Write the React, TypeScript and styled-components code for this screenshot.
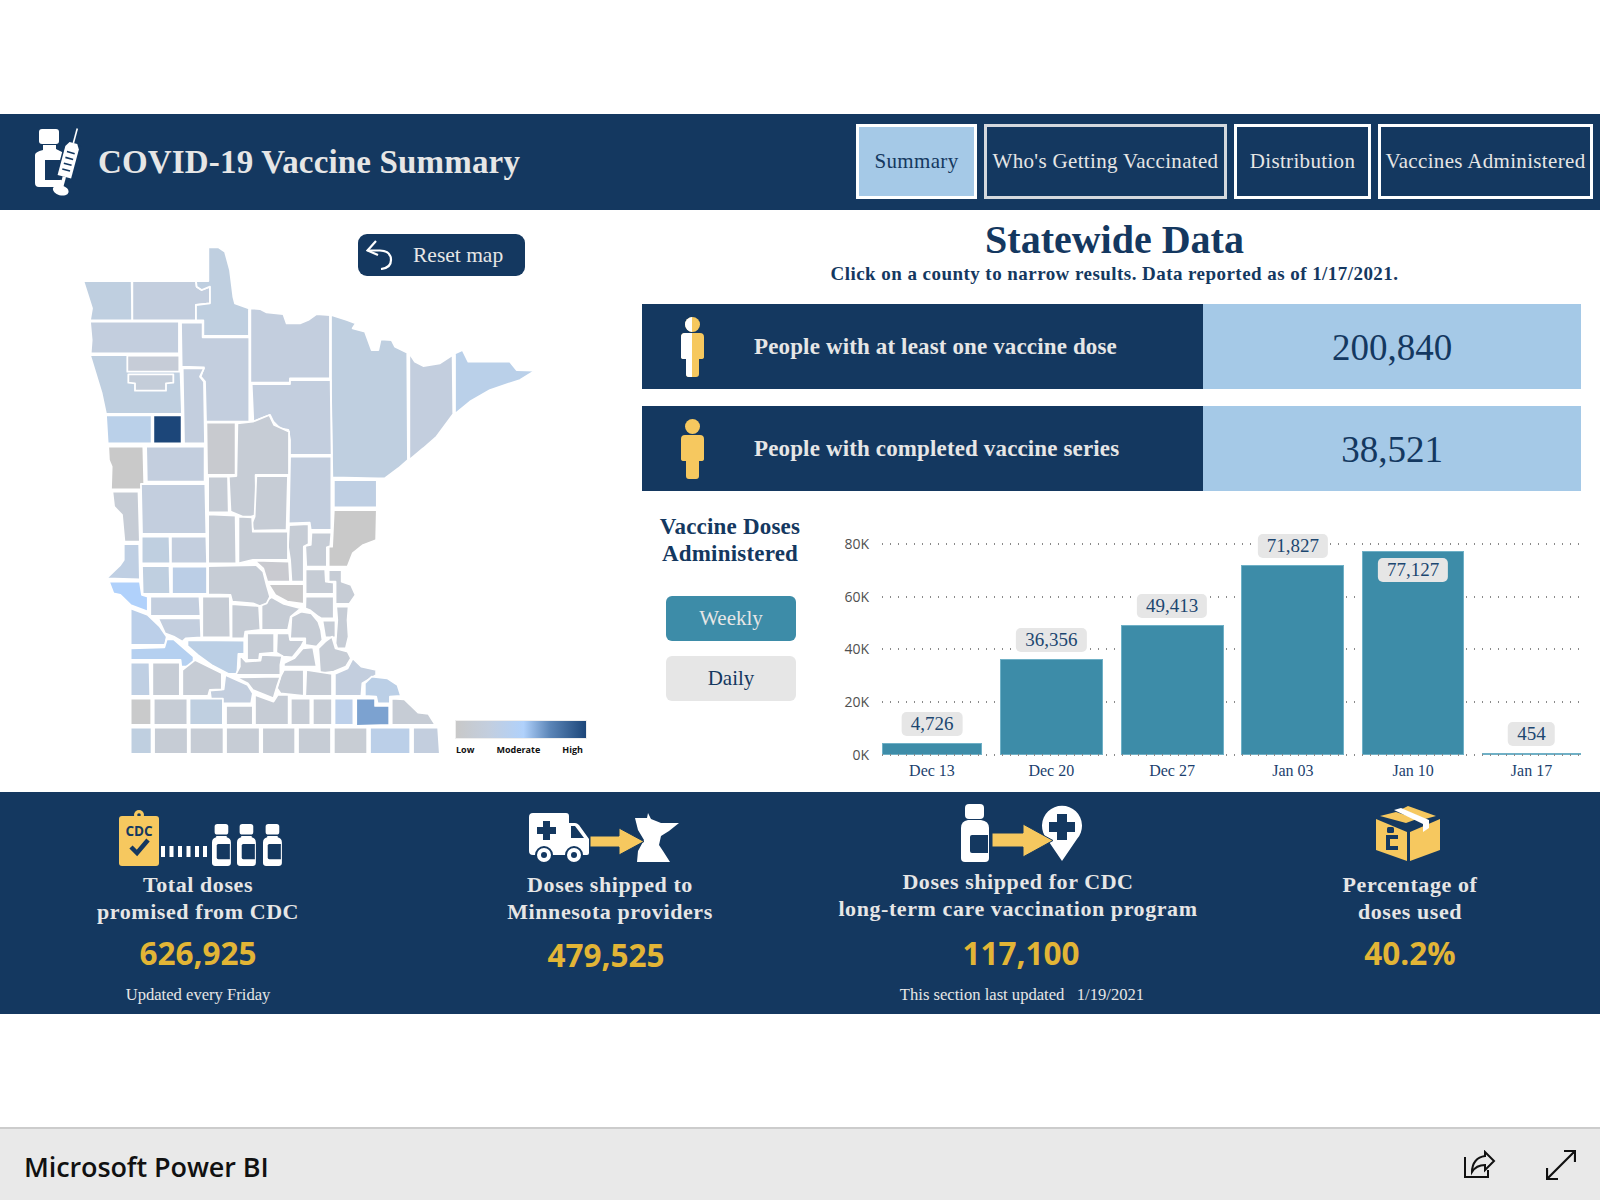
import React from 'react';
import styled, { createGlobalStyle } from 'styled-components';

const NAVY = '#143860';
const LIGHT = '#a5c9e7';
const TEAL = '#3d8ca8';
const GOLD = '#f6c85f';
const PALE = '#e6e6e6';

const GlobalStyle = createGlobalStyle`
  html, body { margin: 0; padding: 0; background: #fff; }
  body { font-family: 'Liberation Serif', 'Times New Roman', serif; }
`;

const Page = styled.div`
  width: 1600px;
  height: 1200px;
  display: flex;
  flex-direction: column;
  overflow: hidden;
`;

const Header = styled.header`
  margin-top: 114px;
  height: 96px;
  flex: none;
  background: ${NAVY};
  display: flex;
  align-items: center;
  padding: 0 7px 0 34px;
  box-sizing: border-box;
`;

const Title = styled.h1`
  margin: 0 0 0 14px;
  font-size: 33px;
  font-weight: 700;
  color: ${PALE};
  letter-spacing: 0.17px;
  flex: 1;
`;

const Nav = styled.nav`
  display: flex;
  gap: 7px;
  margin-bottom: 2px;
`;

const NavButton = styled.div<{ $active?: boolean; $dim?: boolean; $w: number }>`
  width: ${(p) => p.$w}px;
  height: 75px;
  box-sizing: border-box;
  border: 3px solid ${(p) => (p.$dim ? '#d4d8dd' : '#fff')};
  background: ${(p) => (p.$active ? LIGHT : NAVY)};
  color: ${(p) => (p.$active ? NAVY : PALE)};
  font-size: 21px;
  letter-spacing: 0.33px;
  display: flex;
  align-items: center;
  justify-content: center;
  white-space: nowrap;
`;

const Main = styled.main`
  height: 582px;
  flex: none;
  display: flex;
`;

const MapPanel = styled.section`
  position: relative;
  width: 642px;
  height: 582px;
  flex: none;
`;

const ResetButton = styled.div`
  position: absolute;
  left: 358px;
  top: 24px;
  width: 167px;
  height: 42px;
  border-radius: 9px;
  background: ${NAVY};
  color: ${PALE};
  font-size: 21.5px;
  display: flex;
  align-items: center;
  gap: 19px;
  padding-left: 8px;
  box-sizing: border-box;
`;

const Legend = styled.div`
  position: absolute;
  left: 456px;
  top: 511px;
  width: 130px;
`;

const LegendBar = styled.div`
  height: 17px;
  background: linear-gradient(to right, #c8c8c8 0%, #c3cede 25%, #b0d1fb 52%, #5c86b8 72%, #1c4679 100%);
  outline: 1px solid #eee;
`;

const LegendLabels = styled.div`
  display: flex;
  justify-content: space-between;
  margin-top: 5px;
  padding-right: 3px;
  font-family: 'Open Sans', sans-serif;
  font-size: 9px;
  font-weight: 700;
  color: #111;
`;

const DataColumn = styled.section`
  width: 939px;
  flex: none;
  display: flex;
  flex-direction: column;
`;

const DataTitle = styled.h2`
  margin: 10px 0 0;
  padding-left: 6px;
  font-size: 40px;
  line-height: 40px;
  font-weight: 700;
  color: ${NAVY};
  text-align: center;
`;

const DataSub = styled.p`
  margin: 4px 0 20px;
  padding-left: 6px;
  font-size: 19px;
  line-height: 20px;
  font-weight: 700;
  color: ${NAVY};
  text-align: center;
  letter-spacing: 0.45px;
`;

const StatRow = styled.div`
  display: flex;
  height: 85px;
  margin-bottom: 17px;
`;

const StatLabel = styled.div`
  width: 561px;
  background: ${NAVY};
  color: ${PALE};
  font-size: 23px;
  font-weight: 700;
  letter-spacing: 0.14px;
  display: flex;
  align-items: center;
  padding-left: 39px;
  box-sizing: border-box;
  gap: 50px;
`;

const StatValue = styled.div`
  flex: 1;
  background: ${LIGHT};
  color: ${NAVY};
  font-size: 37px;
  display: flex;
  align-items: center;
  justify-content: center;
  padding-top: 1px;
  box-sizing: border-box;
`;

const ChartRow = styled.div`
  display: flex;
  margin-top: -17px;
  height: 301px;
`;

const ChartSide = styled.div`
  width: 176px;
  flex: none;
  display: flex;
  flex-direction: column;
  align-items: center;
  padding-top: 22px;
  box-sizing: border-box;
`;

const SideTitle = styled.h3`
  margin: 0 0 29px;
  font-size: 23px;
  line-height: 27px;
  font-weight: 700;
  color: ${NAVY};
  text-align: center;
  letter-spacing: 0.2px;
`;

const ModeButton = styled.div<{ $on?: boolean }>`
  width: 130px;
  height: 45px;
  margin: 0 0 15px 2px;
  border-radius: 6px;
  background: ${(p) => (p.$on ? TEAL : PALE)};
  color: ${(p) => (p.$on ? PALE : NAVY)};
  font-size: 21px;
  display: flex;
  align-items: center;
  justify-content: center;
`;

const Chart = styled.div`
  margin: 52.7px 0 0 64px;
  width: 699px;
`;

const COLUMNS = '100px 103px 103px 103px 102px 99px';

const Plot = styled.div`
  position: relative;
  height: 211.6px;
  display: grid;
  grid-template-columns: ${COLUMNS};
  column-gap: 17.8px;
  align-items: end;
`;

const GridLine = styled.div`
  position: absolute;
  left: 0;
  right: 0;
  height: 2px;
  margin-bottom: -1px;
  background-image: linear-gradient(to right, #8a8a8a 1.5px, transparent 1.5px);
  background-size: 8px 2px;
  z-index: 3;
`;

const BackLine = styled(GridLine)`
  z-index: 0;
`;

const Tick = styled.span`
  position: absolute;
  right: calc(100% + 13px);
  top: -9px;
  font-family: 'Open Sans', sans-serif;
  font-size: 14px;
  line-height: 20px;
  color: #505050;
`;

const Bar = styled.div`
  position: relative;
  z-index: 1;
  background: ${TEAL};
  box-shadow: inset 0 0 0 1px #6fb0c6;
`;

const Badge = styled.span<{ $inside?: boolean }>`
  position: absolute;
  left: 50%;
  transform: translateX(-50%);
  ${(p) => (p.$inside ? 'top: 7px;' : 'bottom: calc(100% + 7px);')}
  height: 24px;
  padding: 0 9px;
  border-radius: 5px;
  background: ${PALE};
  color: #1c4670;
  font-size: 19px;
  line-height: 24px;
  white-space: nowrap;
`;

const AxisLabels = styled.div`
  display: grid;
  grid-template-columns: ${COLUMNS};
  column-gap: 17.8px;
  margin-top: 7px;
`;

const AxisLabel = styled.span`
  font-size: 16px;
  line-height: 18px;
  text-align: center;
  color: #1c3f6e;
`;

const Footer = styled.footer`
  height: 222px;
  flex: none;
  background: ${NAVY};
  display: grid;
  grid-template-columns: 396px 428px 388px 388px;
`;

const Metric = styled.div<{ $top: number; $nudge?: number }>`
  display: flex;
  flex-direction: column;
  align-items: center;
  padding-top: ${(p) => p.$top}px;
  padding-left: ${(p) => p.$nudge ?? 0}px;
  box-sizing: border-box;
`;

const MetricIcon = styled.div<{ $left?: number; $right?: number }>`
  display: flex;
  margin-left: ${(p) => p.$left ?? 0}px;
  margin-right: ${(p) => p.$right ?? 0}px;
`;

const MetricTitle = styled.div<{ $gap: number }>`
  margin-top: ${(p) => p.$gap}px;
  font-size: 22px;
  line-height: 27px;
  font-weight: 700;
  color: ${PALE};
  text-align: center;
  letter-spacing: 0.58px;
  white-space: nowrap;
`;

const MetricValue = styled.div<{ $gap: number; $left?: number; $right?: number }>`
  margin-top: ${(p) => p.$gap}px;
  margin-left: ${(p) => p.$left ?? 0}px;
  margin-right: ${(p) => p.$right ?? 0}px;
  font-family: 'Open Sans', sans-serif;
  font-size: 31.5px;
  line-height: 42px;
  font-weight: 700;
  color: #e2b536;
`;

const MetricNote = styled.div<{ $left?: number }>`
  margin-top: 11px;
  margin-left: ${(p) => p.$left ?? 0}px;
  font-size: 16.6px;
  line-height: 20px;
  color: ${PALE};
  white-space: pre;
`;

const Spacer = styled.div`
  flex: 1;
`;

const BottomBar = styled.div`
  height: 73px;
  flex: none;
  box-sizing: border-box;
  border-top: 2px solid #ccc;
  background: #e9e9e9;
  display: flex;
  align-items: center;
  padding: 0 24px;
  gap: 50px;
`;

const Brand = styled.span`
  flex: 1;
  padding-top: 3px;
  font-family: 'Open Sans', sans-serif;
  font-size: 27px;
  font-weight: 600;
  letter-spacing: -0.1px;
  color: #111;
`;

const county = (fill: string, pts: string) => ({ fill, pts });
const C1 = '#c3cede';
const C2 = '#c6ccd5';
const C3 = '#bfcfe0';
const C4 = '#bad0e9';
const C5 = '#c9c9c9';

// traced from the 3x crops of the reference, one set per crop
const northCounties = [
  county(C3, '40,123 185,123 187,241 60,241 66,205'),
  county(C1, '187,123 378,123 380,140 395,150 420,140 420,190 378,195 378,241 187,241'),
  county(C3, '415,22 445,22 465,35 480,90 490,170 495,190 537,205 537,288 400,288 400,241 378,241 378,195 420,190 420,140 395,150 380,140 378,123 415,123'),
  county(C1, '541,205 570,207 590,217 640,222 650,250 690,250 715,240 740,222 780,225 780,415 660,415 660,428 541,428'),
  county(C3, '783,225 830,240 858,250 848,265 885,275 905,330 925,330 932,298 965,300 975,320 1012,338 1014,660 985,685 945,715 925,715 787,712 783,460'),
  county(C1, '1018,340 1035,365 1060,378 1110,370 1148,345 1150,522 1100,590 1060,625 1018,660'),
  county(C4, '1155,340 1178,330 1195,365 1260,365 1320,365 1340,390 1395,392 1350,420 1260,450 1200,485 1155,522'),
  county(C1, '60,245 327,245 327,340 62,340 65,300'),
  county(C1, '333,248 398,248 398,292 538,292 538,545 505,545 408,545 405,425 392,410 402,382 335,380'),
  county(C3, '60,345 330,345 336,522 108,522 95,460'),
  county('#c6ccd7', '172,347 328,347 328,395 172,395'),
  county('#c4cdd9', '175,403 310,403 310,428 288,430 288,452 195,452 195,430 175,428'),
  county(C1, '338,385 402,385 390,410 402,425 405,610 342,610'),
  county(C1, '545,432 660,432 660,420 782,420 785,645 660,645 660,600 655,570 630,565 610,545 600,525 580,533 550,545'),
  county(C4, '108,526 245,526 245,610 113,610'),
  county('#1c4679', '250,526 335,526 335,610 250,610'),
];

const southCounties = [
  county(C5, '140,140 242,140 245,268 148,268 150,200 142,180'),
  county(C1, '250,140 420,140 420,245 252,245'),
  county(C2, '152,275 228,275 232,425 187,425 180,345 157,320'),
  county(C1, '235,252 422,252 425,402 238,402'),
  county('#c8cacf', '425,68 510,68 510,225 427,225'),
  county(C2, '515,70 560,65 608,45 622,75 665,95 665,225 568,225 570,345 555,350 530,350 495,335 490,230 512,228'),
  county(C2, '430,230 488,230 490,337 430,337'),
  county(C2, '430,343 510,347 512,490 430,490'),
  county(C2, '570,228 662,228 658,390 562,392 555,375 565,350'),
  county(C1, '668,170 788,170 788,390 728,390 725,368 664,370'),
  county('#bfcfe3', '795,240 920,240 920,322 795,322'),
  county(C5, '795,330 920,330 918,420 880,435 850,460 835,500 780,500 780,440 790,440'),
  county(C2, '730,398 788,398 785,438 775,442 775,500 715,500 712,438 728,435'),
  county(C2, '665,375 722,372 722,432 708,440 708,545 672,545 668,480 662,440'),
  county(C2, '518,350 558,352 560,395 662,395 662,480 560,480 518,490'),
  county('#c9cad0', '565,482 665,485 668,545 602,545 590,505'),
  county('#c9c9cb', '605,552 708,552 708,612 660,605 625,585'),
  county(C2, '713,508 770,508 772,545 795,548 795,582 713,582'),
  county(C2, '780,510 818,510 818,545 845,555 858,585 840,612 800,612 800,545 780,545'),
  county(C2, '713,590 795,590 795,655 758,655 750,650 725,630 712,625'),
  county(C2, '802,620 838,620 835,660 838,710 830,745 805,745 800,730 805,660'),
  county(C2, '762,662 800,662 800,712 770,712'),
  county(C2, '672,650 700,635 730,640 750,665 758,690 762,720 745,740 712,735 712,715 668,715'),
  county(C2, '590,605 615,592 650,612 700,625 670,650 662,690 585,690 585,615'),
  county(C2, '430,498 570,495 590,515 600,555 610,590 600,610 580,618 560,610 500,605 495,585 430,583'),
  county(C3, '237,410 318,410 320,490 237,490'),
  county(C1, '322,410 425,410 427,490 322,490'),
  county('#bfcfe3', '185,432 230,432 232,538 135,535 175,495 185,480'),
  county(C3, '238,498 318,498 320,582 240,582'),
  county('#bbcee6', '325,500 427,500 427,582 325,582'),
  county('#b0d1fb', '142,545 232,545 238,585 255,590 255,635 205,615 175,585 155,580'),
  county(C1, '262,590 405,590 408,648 262,648'),
  county(C2, '413,590 493,590 495,712 413,712'),
  county(C2, '498,612 578,618 582,690 538,695 535,715 498,715'),
  county(C1, '285,655 408,655 410,712 365,715 355,725 330,710 305,700'),
  county('#bbcfe9', '205,625 255,645 290,680 310,710 305,735 205,735'),
  county('#b5d0f0', '205,745 303,742 310,718 330,718 360,745 388,770 388,800 352,800 350,780 205,780'),
  county('#bbcfe5', '370,720 535,722 535,762 518,762 515,822 490,822 440,795 400,765 370,738'),
  county(C2, '543,700 622,700 622,758 580,762 578,780 543,780'),
  county(C2, '630,700 665,700 668,720 710,720 700,740 675,772 648,770 628,758'),
  county(C2, '522,765 540,785 582,782 585,765 645,768 640,795 640,825 510,825 522,800'),
  county(C2, '650,790 680,775 705,745 735,742 745,800 650,800'),
  county(C2, '750,745 770,725 790,710 800,745 835,755 845,775 830,800 795,815 755,820'),
  county(C1, '850,775 875,800 918,810 918,825 878,850 875,888 798,888 798,822 835,805'),
  county('#bbcfe6', '885,850 905,830 950,835 980,855 990,888 958,890 958,910 922,910 918,890 885,888'),
  county(C2, '715,810 790,822 790,888 712,888'),
  county(C2, '650,810 708,810 708,888 640,880 630,865 640,830'),
  county(C2, '510,832 640,830 630,860 620,895 560,870 545,850'),
  county(C1, '480,825 545,855 560,880 555,910 440,910 435,872 475,868'),
  county(C2, '355,810 392,780 470,820 470,868 435,870 430,888 355,888'),
  county('#bfcfe3', '205,788 260,788 262,888 205,888'),
  county(C2, '268,788 348,788 348,888 268,888'),
  county('#c9cacb', '205,896 265,896 265,975 205,975'),
  county(C2, '272,896 370,896 370,975 272,975'),
  county(C3, '376,896 473,896 473,975 376,975'),
  county(C2, '482,918 560,918 560,975 482,975'),
  county(C2, '566,885 620,905 632,885 664,885 664,975 566,975'),
  county(C2, '670,896 727,896 727,975 670,975'),
  county(C2, '734,896 790,896 790,975 734,975'),
  county('#bdd0ea', '797,896 852,896 852,975 797,975'),
  county('#7ca2d0', '860,896 915,896 915,918 956,918 956,975 860,978'),
  county(C2, '963,896 1000,898 1040,938 1070,942 1090,975 963,975'),
  county(C3, '205,983 266,983 266,1062 205,1062'),
  county(C2, '273,983 371,983 371,1062 273,1062'),
  county(C2, '377,983 475,983 475,1062 377,1062'),
  county(C2, '482,983 580,983 580,1062 482,1062'),
  county(C2, '587,983 683,983 683,1062 587,1062'),
  county(C2, '691,983 787,983 787,1062 691,1062'),
  county('#c8cdd4', '795,983 892,983 892,1062 795,1062'),
  county('#bbcfe8', '900,983 1017,983 1017,1062 900,1062'),
  county(C1, '1025,983 1098,983 1103,1062 1025,1062'),
];

const MapSvg = () => (
  <svg width="642" height="582" viewBox="0 210 642 582" style={{ display: 'block' }}>
    <g transform="translate(70,240) scale(0.3333)" stroke="#fff" strokeWidth="1.8" strokeLinejoin="round">
      {northCounties.map((c) => (
        <polygon key={c.pts} points={c.pts} fill={c.fill} vectorEffect="non-scaling-stroke" />
      ))}
    </g>
    <g transform="translate(60,400) scale(0.3444,0.3333)" stroke="#fff" strokeWidth="1.8" strokeLinejoin="round">
      {southCounties.map((c) => (
        <polygon key={c.pts} points={c.pts} fill={c.fill} vectorEffect="non-scaling-stroke" />
      ))}
    </g>
  </svg>
);

const LogoIcon = () => (
  <svg width="50" height="70" viewBox="0 0 50 70">
    <rect x="5" y="2" width="20" height="15" rx="3" fill="#fff" />
    <path d="M9 18h13v4l6 3v35H5q-4 0-4-4V28q0-3 8-5z" fill="#fff" />
    <rect x="11" y="33" width="15" height="20" fill={NAVY} />
    <g transform="rotate(15 33 36)">
      <rect x="25.5" y="16" width="17" height="38" fill={NAVY} />
      <path d="M33.2 0h1.600v15h-1.600z" fill="#fff" />
      <path d="M27 20l3-5h8l3 5v30H27z" fill="#fff" />
      <path d="M30 25h8M30 31h8M30 37h8M30 43h8" stroke={NAVY} strokeWidth="1.6" />
      <rect x="32.300" y="50" width="3.400" height="11" fill="#fff" />
      <ellipse cx="34" cy="64" rx="8" ry="5" fill="#fff" />
    </g>
  </svg>
);

const UndoIcon = () => (
  <svg width="28" height="30" viewBox="0 0 28 30" fill="none" stroke="#fff" strokeWidth="2.2">
    <path d="M10 1L1.500 10.500 12 15" />
    <path d="M1.500 10.500H14Q25 11 25 20 25 28 15 29" />
  </svg>
);

const PersonIcon = ({ half }: { half?: boolean }) => (
  <svg width="23" height="60" viewBox="0 0 23 60">
    <defs>
      <clipPath id="left-half">
        <rect x="0" y="0" width="11" height="60" />
      </clipPath>
    </defs>
    <g fill={GOLD}>
      <circle cx="11.5" cy="7.5" r="7.5" />
      <path d="M4 16h15q4 0 4 4v20q0 2-3 2h-2v15q0 3-3 3H8q-3 0-3-3V42H3q-3 0-3-2V20q0-4 4-4z" />
    </g>
    {half && (
      <g fill="#fff" clipPath="url(#left-half)">
        <circle cx="11.5" cy="7.5" r="7.5" />
        <path d="M4 16h15q4 0 4 4v20q0 2-3 2h-2v15q0 3-3 3H8q-3 0-3-3V42H3q-3 0-3-2V20q0-4 4-4z" />
      </g>
    )}
  </svg>
);

const Vial = ({ x, y, k }: { x: number; y: number; k: number }) => (
  <g transform={`translate(${x} ${y}) scale(${k})`}>
    <rect x="2.5" y="0" width="13" height="10" rx="2.5" fill="#fff" />
    <path d="M4 11.500h10l0 1q4 1 4 5V37q0 3-3 3H3q-3 0-3-3V17.500q0-4 4-5z" fill="#fff" />
    <path d="M17 19H6q-1.500 0-1.500 1.500V32q0 1.500 1.500 1.500H17z" fill={NAVY} />
  </g>
);

const CdcIcon = () => (
  <svg width="163" height="56" viewBox="0 0 163 56">
    <circle cx="20" cy="5" r="5" fill={GOLD} />
    <circle cx="20" cy="5" r="1.800" fill={NAVY} />
    <rect x="0" y="6" width="40" height="50" rx="3" fill={GOLD} />
    <text x="20" y="26" textAnchor="middle" fontFamily="'Open Sans', sans-serif" fontWeight="700" fontSize="13.5" fill={NAVY}>
      CDC
    </text>
    <path d="M12 37l6 6 11-13" fill="none" stroke={NAVY} strokeWidth="4.500" />
    {[42, 50.5, 59, 67.5, 76, 84].map((x) => (
      <rect key={x} x={x} y="36" width="4" height="11" fill="#fff" />
    ))}
    <Vial x={93} y={14} k={1.050} />
    <Vial x={118} y={14} k={1.050} />
    <Vial x={144} y={14} k={1.050} />
  </svg>
);

const VanIcon = () => (
  <svg width="151" height="50" viewBox="0 0 151 50">
    <path d="M4 0h33q3 0 3 3v7h6q2 0 4 2l10 14v14q0 2-2 2H4q-4 0-4-4V4q0-4 4-4z" fill="#fff" />
    <path d="M42 13h4l9 12H42z" fill={NAVY} />
    <path d="M14 8h7v6h6v7h-6v6h-7v-6H8v-7h6z" fill={NAVY} />
    <circle cx="15" cy="42" r="8" fill="#fff" stroke={NAVY} strokeWidth="2" />
    <circle cx="15" cy="42" r="3" fill={NAVY} />
    <circle cx="45" cy="42" r="8" fill="#fff" stroke={NAVY} strokeWidth="2" />
    <circle cx="45" cy="42" r="3" fill={NAVY} />
    <polygon points="106,5 118,5 119,0 122,6 132,10 150,10 140,18 132,23 130,32 134,38 141,49 108,49 109,38 115,27 109,17" fill="#fff" />
    <path d="M61 23h29V15l25 13.500L90 42v-8H61z" fill={GOLD} stroke={NAVY} strokeWidth="1" />
  </svg>
);

const PinIcon = () => (
  <svg width="121" height="58" viewBox="0 0 121 58">
    <rect x="4" y="0" width="19" height="15" rx="4" fill="#fff" />
    <path d="M7 16h13q8 1 8 8v30q0 4-4 4H4q-4 0-4-4V24q0-7 7-8z" fill="#fff" />
    <path d="M27 31H11q-2 0-2 2v14q0 2 2 2h16z" fill={NAVY} />
    <path d="M101 57L86 35a20 20 0 1 1 30 0z" fill="#fff" />
    <path d="M96 10h10v8h8v10h-8v8H96v-8h-8V18h8z" fill={NAVY} />
    <path d="M31 29h31V20l30 16.500L62 53v-10H31z" fill={GOLD} stroke={NAVY} strokeWidth="1" />
  </svg>
);

const BoxIcon = () => (
  <svg width="64" height="56" viewBox="0 0 64 56">
    <path d="M0 13l31 13v29L0 44z" fill={GOLD} />
    <path d="M34 26l30-13v31L34 55z" fill={GOLD} />
    <path d="M4 10l16-4 21 7-11 4z" fill={GOLD} />
    <path d="M26 3l6-3 28 10-11 3z" fill={GOLD} />
    <path d="M18 4l7-2 28 12v8l-6 4v-8z" fill="#fff" />
    <rect x="11" y="21" width="7" height="6" rx="1.500" fill={NAVY} />
    <path d="M10 29h12v15H10z" fill={NAVY} />
    <rect x="14" y="33" width="8" height="7" fill={GOLD} />
  </svg>
);

const ShareIcon = () => (
  <svg width="32" height="30" viewBox="0 0 32 30" fill="none" stroke="#111" strokeWidth="2">
    <path d="M1 7v20h23v-7" />
    <path d="M8 22C8 13 13 7 21 6V2l9 9-9 9v-5c-6 0-10 2-13 7z" />
  </svg>
);

const ExpandIcon = () => (
  <svg width="30" height="30" viewBox="0 0 30 30" fill="none" stroke="#111" strokeWidth="2.2">
    <path d="M1 29L29 1M18 1h11v11M1 18v11h11" />
  </svg>
);

const bars = [
  { day: 'Dec 13', n: 4726 },
  { day: 'Dec 20', n: 36356 },
  { day: 'Dec 27', n: 49413 },
  { day: 'Jan 03', n: 71827 },
  { day: 'Jan 10', n: 77127 },
  { day: 'Jan 17', n: 454 },
];

const PER_UNIT = 52.9 / 20000;

export default function App() {
  return (
    <Page>
      <GlobalStyle />
      <Header>
        <LogoIcon />
        <Title>COVID-19 Vaccine Summary</Title>
        <Nav>
          <NavButton $active $w={121}>Summary</NavButton>
          <NavButton $dim $w={243}>Who's Getting Vaccinated</NavButton>
          <NavButton $w={137}>Distribution</NavButton>
          <NavButton $w={215}>Vaccines Administered</NavButton>
        </Nav>
      </Header>
      <Main>
        <MapPanel>
          <MapSvg />
          <ResetButton>
            <UndoIcon />
            <span>Reset map</span>
          </ResetButton>
          <Legend>
            <LegendBar />
            <LegendLabels>
              <span>Low</span>
              <span>Moderate</span>
              <span>High</span>
            </LegendLabels>
          </Legend>
        </MapPanel>
        <DataColumn>
          <DataTitle>Statewide Data</DataTitle>
          <DataSub>Click on a county to narrow results. Data reported as of 1/17/2021.</DataSub>
          <StatRow>
            <StatLabel>
              <PersonIcon half />
              People with at least one vaccine dose
            </StatLabel>
            <StatValue>200,840</StatValue>
          </StatRow>
          <StatRow>
            <StatLabel>
              <PersonIcon />
              People with completed vaccine series
            </StatLabel>
            <StatValue>38,521</StatValue>
          </StatRow>
          <ChartRow>
            <ChartSide>
              <SideTitle>
                Vaccine Doses
                <br />
                Administered
              </SideTitle>
              <ModeButton $on>Weekly</ModeButton>
              <ModeButton>Daily</ModeButton>
            </ChartSide>
            <Chart>
              <Plot>
                {[20, 40, 60, 80].map((k) => (
                  <BackLine key={k} style={{ bottom: k * 1000 * PER_UNIT }}>
                    <Tick>{k}K</Tick>
                  </BackLine>
                ))}
                <GridLine style={{ bottom: 0 }}>
                  <Tick>0K</Tick>
                </GridLine>
                {bars.map((b) => (
                  <Bar key={b.day} style={{ height: Math.max(2, b.n * PER_UNIT) }}>
                    <Badge $inside={b.n > 75000}>{b.n.toLocaleString('en-US')}</Badge>
                  </Bar>
                ))}
              </Plot>
              <AxisLabels>
                {bars.map((b) => (
                  <AxisLabel key={b.day}>{b.day}</AxisLabel>
                ))}
              </AxisLabels>
            </Chart>
          </ChartRow>
        </DataColumn>
      </Main>
      <Footer>
        <Metric $top={18}>
          <MetricIcon $left={5}>
            <CdcIcon />
          </MetricIcon>
          <MetricTitle $gap={5}>
            Total doses
            <br />
            promised from CDC
          </MetricTitle>
          <MetricValue $gap={7}>626,925</MetricValue>
          <MetricNote>Updated every Friday</MetricNote>
        </Metric>
        <Metric $top={21}>
          <MetricIcon $right={12}>
            <VanIcon />
          </MetricIcon>
          <MetricTitle $gap={8}>
            Doses shipped to
            <br />
            Minnesota providers
          </MetricTitle>
          <MetricValue $gap={9} $right={8}>479,525</MetricValue>
        </Metric>
        <Metric $top={12}>
          <MetricIcon $left={6}>
            <PinIcon />
          </MetricIcon>
          <MetricTitle $gap={6}>
            Doses shipped for CDC
            <br />
            long-term care vaccination program
          </MetricTitle>
          <MetricValue $gap={10} $left={6}>117,100</MetricValue>
          <MetricNote $left={8}>This section last updated   1/19/2021</MetricNote>
        </Metric>
        <Metric $top={14} $nudge={8}>
          <MetricIcon $right={4}>
            <BoxIcon />
          </MetricIcon>
          <MetricTitle $gap={9}>
            Percentage of
            <br />
            doses used
          </MetricTitle>
          <MetricValue $gap={7}>40.2%</MetricValue>
        </Metric>
      </Footer>
      <Spacer />
      <BottomBar>
        <Brand>Microsoft Power BI</Brand>
        <ShareIcon />
        <ExpandIcon />
      </BottomBar>
    </Page>
  );
}
